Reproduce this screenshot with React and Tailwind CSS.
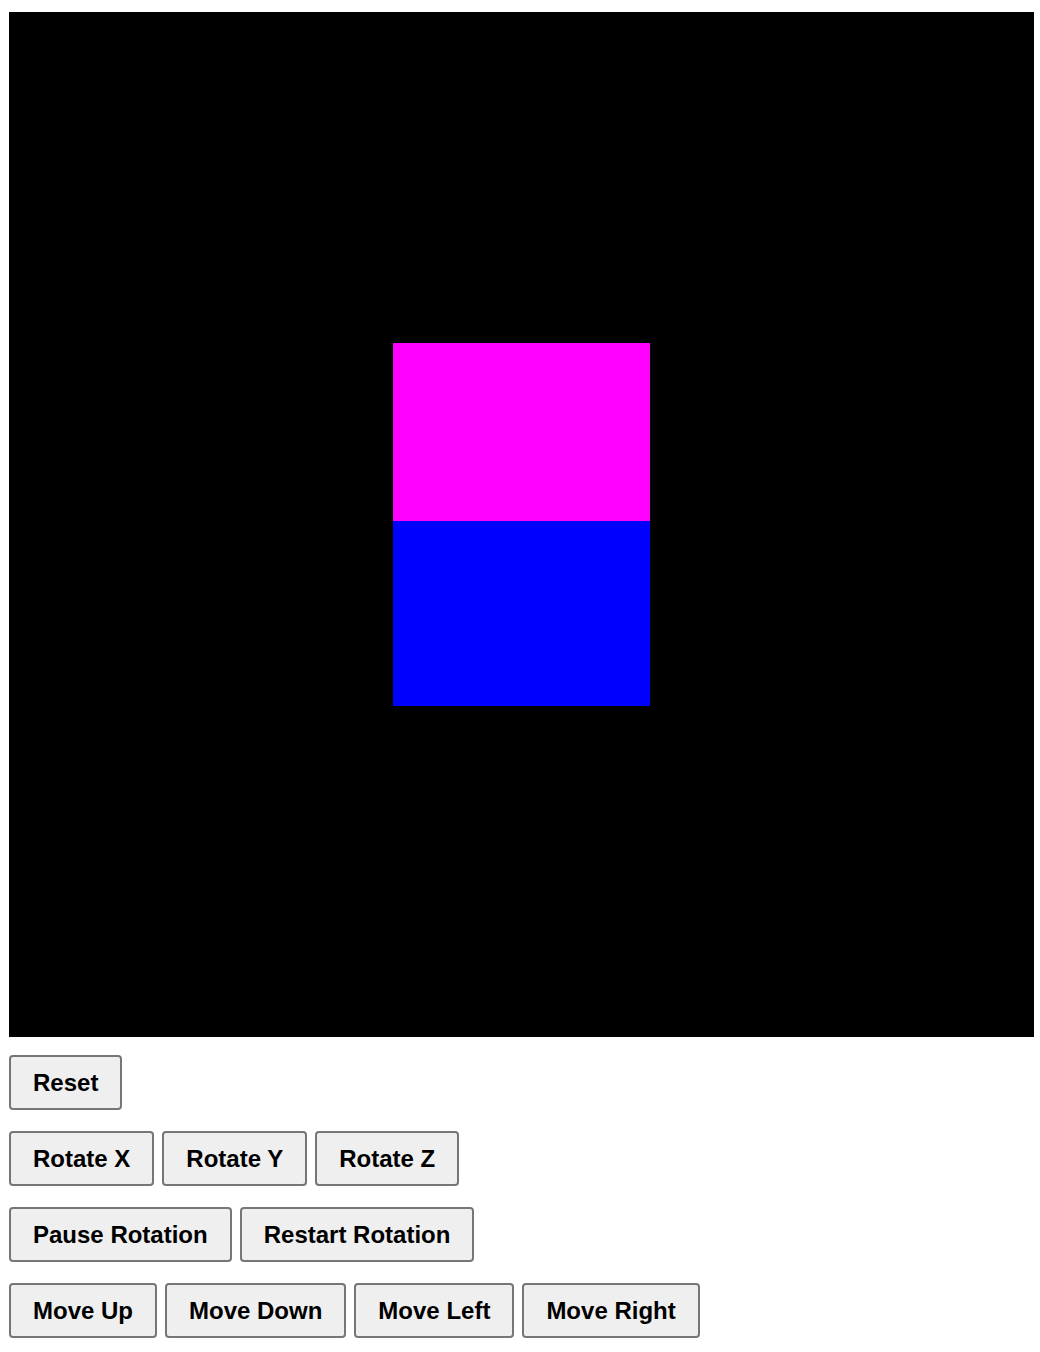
const btn =
  'h-[55px] rounded-[4px] border-2 border-[#767676] bg-[#efefef] px-[22px] text-[24px] font-bold leading-[27px] text-black';

const rows = [
  ['Reset'],
  ['Rotate X', 'Rotate Y', 'Rotate Z'],
  ['Pause Rotation', 'Restart Rotation'],
  ['Move Up', 'Move Down', 'Move Left', 'Move Right'],
];

export default function App() {
  return (
    <div className="min-h-screen bg-white pl-[9px] pt-[12px] font-['Liberation_Sans',Arial,sans-serif]">
      {/* scene */}
      <div className="flex h-[1025px] w-[1025px] items-center justify-center bg-black">
        <div className="flex w-[257px] flex-col">
          <div className="h-[178px] bg-[#ff00ff]" />
          <div className="h-[185px] bg-[#0000ff]" />
        </div>
      </div>

      <div className="mt-[18px] flex flex-col gap-[21px]">
        {rows.map((row, i) => (
          <div key={i} className="flex gap-[8px]">
            {row.map((label) => (
              <button key={label} className={btn}>
                {label}
              </button>
            ))}
          </div>
        ))}
      </div>
    </div>
  );
}
